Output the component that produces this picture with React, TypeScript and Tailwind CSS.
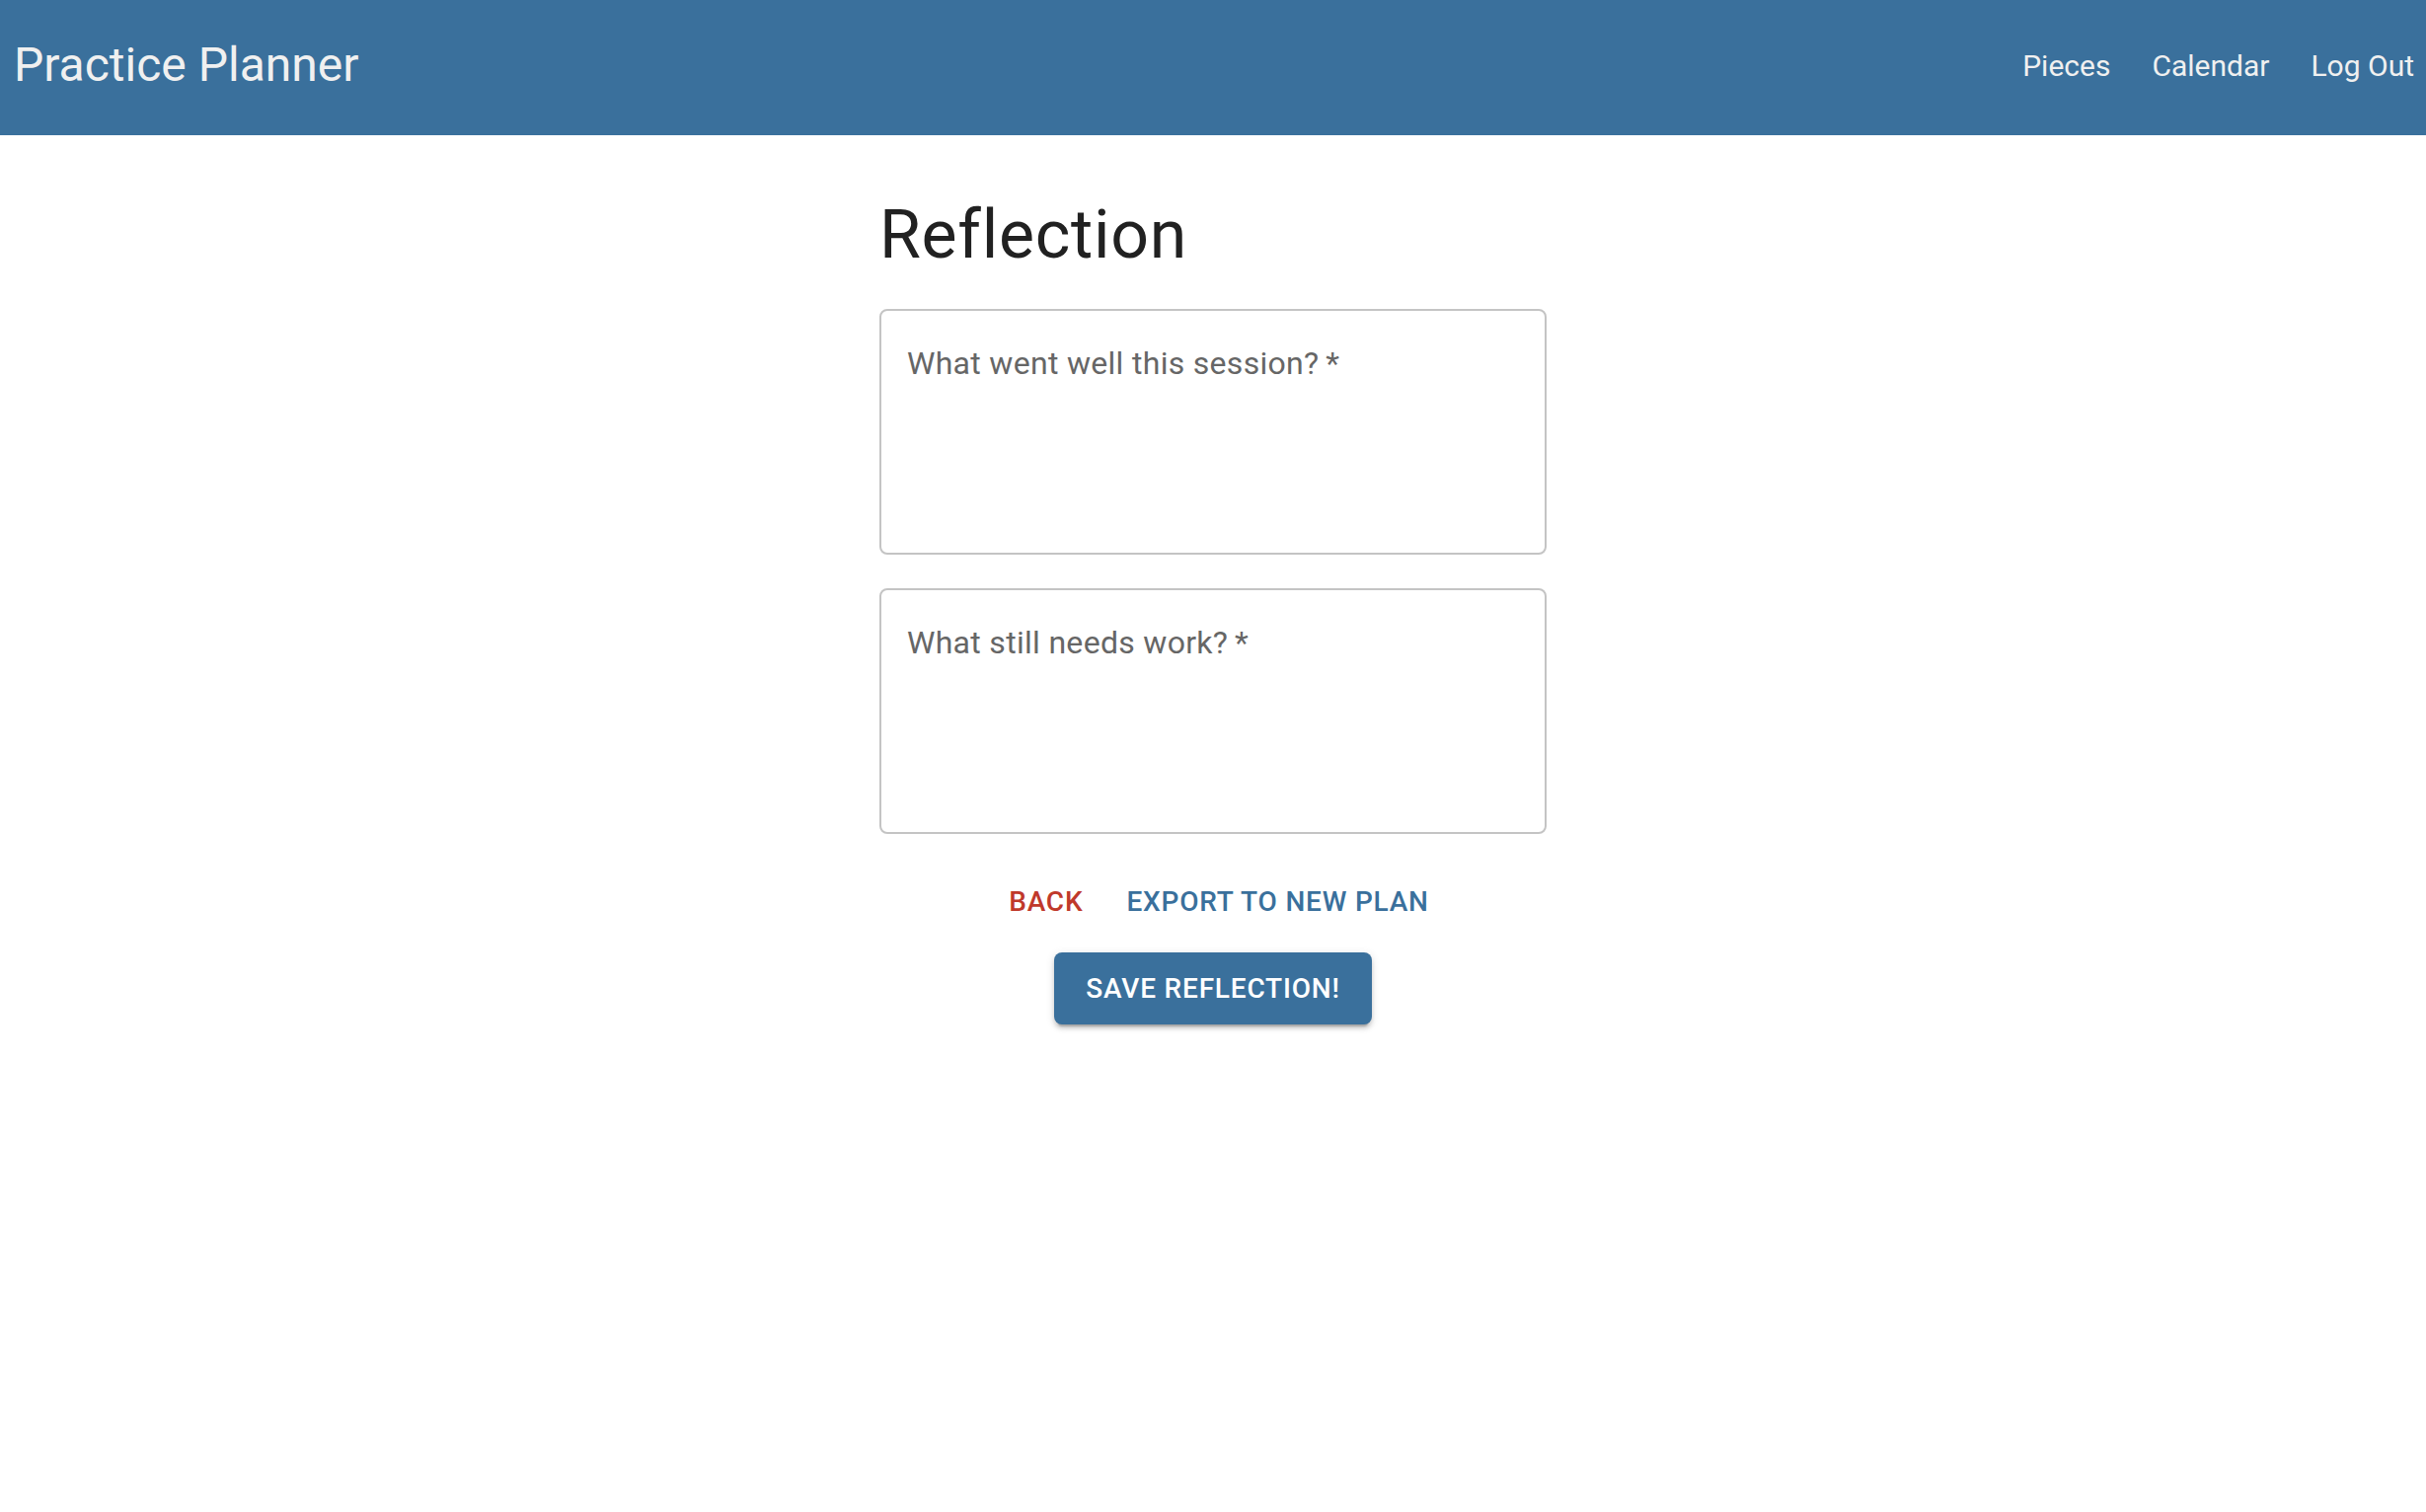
import { useState } from "react";

const navLinks = ["Pieces", "Calendar", "Log Out"];

function ReflectionField({
  label,
  value,
  onChange,
}: {
  label: string;
  value: string;
  onChange: (v: string) => void;
}) {
  return (
    <textarea
      rows={4}
      value={value}
      placeholder={`${label}\u2009*`}
      onChange={(e) => onChange(e.target.value)}
      className="block w-full h-[249px] resize-none rounded-[8px] border-2 border-[#c4c4c4] bg-white px-[26px] pt-[30px] text-[32px] leading-[46px] tracking-[0.3px] text-[#212121] placeholder:text-[#666666] outline-none"
    />
  );
}

export default function App() {
  const [wentWell, setWentWell] = useState("");
  const [needsWork, setNeedsWork] = useState("");

  return (
    <div className="min-h-screen bg-white font-['Roboto','Liberation_Sans',sans-serif]">
      <header className="flex h-[137px] items-center justify-between bg-[#3a709c] pl-[14px] pr-[12px] text-[#f0f0f0]">
        <h1 className="mb-[6px] text-[48px] font-normal leading-none">Practice Planner</h1>
        <nav className="flex items-center gap-[42px] mb-[3px]">
          {navLinks.map((link) => (
            <a key={link} href="#" className="text-[30px] leading-none">
              {link}
            </a>
          ))}
        </nav>
      </header>

      <main className="mx-auto w-[676px] pt-[59px]">
        <h2 className="text-[68px] leading-[84px] font-normal tracking-[0.7px] text-[#212121]">
          Reflection
        </h2>

        <form
          onSubmit={(e) => e.preventDefault()}
          className="mt-[33px] flex flex-col gap-[34px]"
        >
          <ReflectionField
            label="What went well this session?"
            value={wentWell}
            onChange={setWentWell}
          />
          <ReflectionField
            label="What still needs work?"
            value={needsWork}
            onChange={setNeedsWork}
          />
        </form>

        <div className="mt-[32px] flex justify-center gap-[12px] pl-[12px]">
          <button
            type="button"
            className="rounded-[8px] px-[16px] py-[12px] text-[28px] leading-[49px] font-medium uppercase tracking-[0.8px] text-[#c0392b]"
          >
            Back
          </button>
          <button
            type="button"
            className="rounded-[8px] px-[16px] py-[12px] text-[28px] leading-[49px] font-medium uppercase tracking-[0.8px] text-[#3a709c]"
          >
            Export to new plan
          </button>
        </div>

        <div className="mt-[15px] flex justify-center">
          <button
            type="submit"
            className="rounded-[8px] bg-[#3a709c] px-[32px] py-[12px] text-[28px] leading-[49px] font-medium uppercase tracking-[0.8px] text-white shadow-[0_6px_2px_-4px_rgba(0,0,0,0.2),0_4px_4px_0_rgba(0,0,0,0.14),0_2px_10px_0_rgba(0,0,0,0.12)]"
          >
            Save Reflection!
          </button>
        </div>
      </main>
    </div>
  );
}
